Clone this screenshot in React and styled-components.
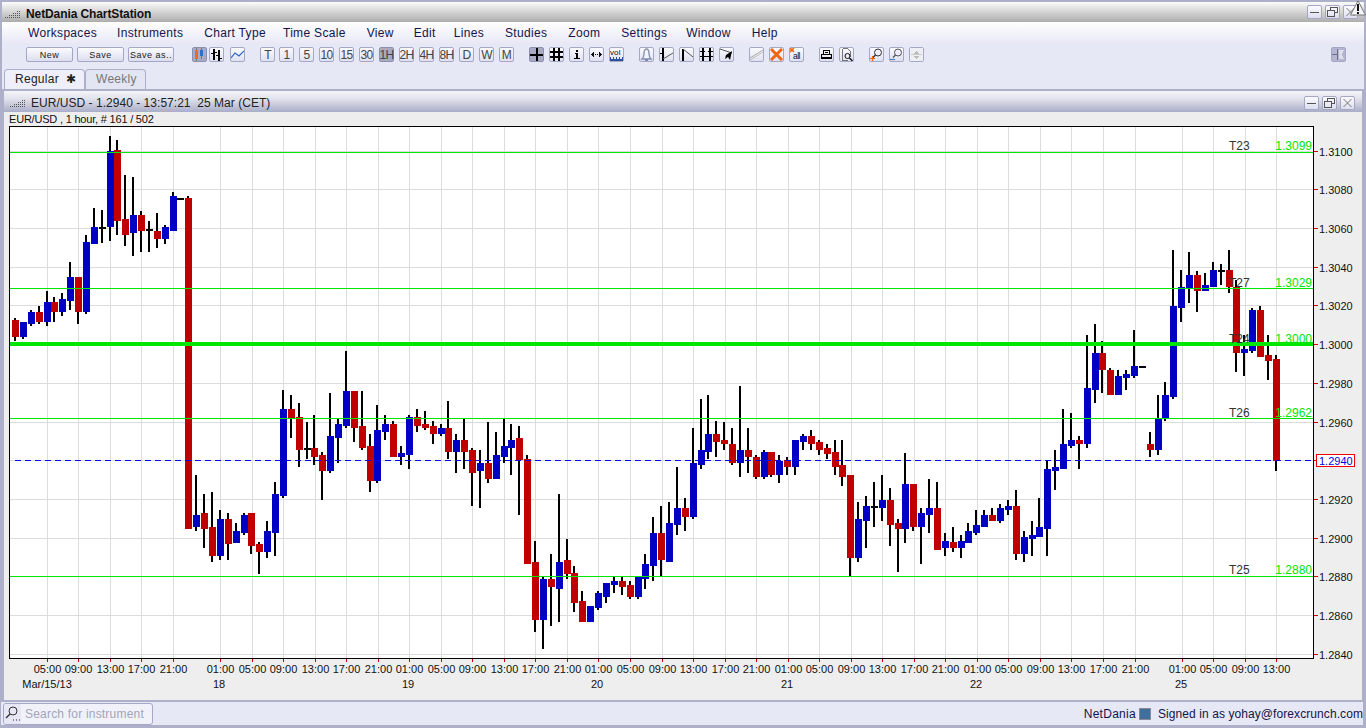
import React from 'react'
import styled, { createGlobalStyle } from 'styled-components'

const GlobalStyle = createGlobalStyle`
	html, body {
		margin: 0;
		padding: 0;
		background: #adb0c8;
	}
	* {
		box-sizing: border-box;
	}
`

const Frame = '#adb0c8'
const Pane = '#e7e8f5'

const Page = styled.div`
	width: 1366px;
	height: 728px;
	position: relative;
	overflow: hidden;
	display: flex;
	flex-direction: column;
	padding-top: 2px;
	background: ${Frame};
	font-family: "Liberation Sans", Arial, sans-serif;
`

const TitleBar = styled.div`
	height: 20px;
	margin: 0 2px;
	display: flex;
	align-items: center;
	padding: 4px 0 0 3px;
	background: linear-gradient(#fbfbfb, #d8d8d8 45%, #adadad);
	font-size: 12px;
	font-weight: bold;
	color: #111;
	letter-spacing: -0.1px;
`

const Grip = styled.svg`
	width: 15px;
	height: 10px;
	margin-right: 6px;
	flex: none;
`

const WindowButtons = styled.div`
	margin-left: auto;
	display: flex;
	gap: 3px;
	margin-right: ${p => p.$right}px;
	margin-top: ${p => p.$top}px;
`

const WindowButton = styled.div`
	width: 15px;
	height: 14px;
	display: flex;
	align-items: center;
	justify-content: center;
	border: 1px solid #a5a8c4;
	border-radius: 2px;
	background: linear-gradient(#fbfbfe, #dcdeee);
`

const WarnMark = styled.svg`
	position: absolute;
	top: 0;
	right: 0;
	width: 16px;
	height: 16px;
`

const MenuBar = styled.div`
	height: 22px;
	margin: 0 2px;
	display: flex;
	align-items: center;
	padding-left: 26px;
	background: linear-gradient(#ffffff, ${Pane});
	font-size: 12px;
	color: #14144a;
	letter-spacing: 0.32px;
`

const MenuItem = styled.span`
	margin-right: ${p => p.$gap}px;
`

const ToolArea = styled.div`
	height: 45px;
	margin: 0 2px;
	background: ${Pane};
	display: flex;
	flex-direction: column;
`

const ToolRow = styled.div`
	height: 25px;
	display: flex;
	align-items: flex-start;
	padding: 3px 0 0 24px;
	gap: 15px;
`

const Group = styled.div`
	display: flex;
	gap: ${p => p.$gap ?? 5}px;
	margin-left: ${p => p.$left ?? 0}px;
`

const TextButton = styled.div`
	width: ${p => p.$w}px;
	height: 15px;
	display: flex;
	align-items: center;
	justify-content: center;
	border: 1px solid #a5a8c4;
	border-radius: 2px;
	background: linear-gradient(#fbfbfe, #dcdeee);
	font-size: 9px;
	color: #222;
	letter-spacing: 0.5px;
`

const IconButton = styled.div`
	width: 15px;
	height: 15px;
	display: flex;
	align-items: center;
	justify-content: center;
	border: 1px solid ${p => (p.$active ? '#8c8fae' : '#a5a8c4')};
	border-radius: 2px;
	background: ${p => (p.$active ? '#a9abc6' : 'linear-gradient(#fafafe, #dfe1f0)')};
	font-size: 12px;
	color: #444;
	letter-spacing: -0.6px;
	white-space: nowrap;
	svg {
		display: block;
		flex: none;
	}
`

const PinButton = styled(IconButton)`
	position: absolute;
	top: 47px;
	left: 1331px;
	background: #b4b6cf;
	border-color: #a5a8c4;
`

const TabRow = styled.div`
	height: 20px;
	display: flex;
	align-items: flex-end;
	padding-left: 2px;
`

const Tab = styled.div`
	height: 20px;
	width: ${p => p.$w}px;
	padding: 0 0 2px ${p => p.$pad}px;
	display: flex;
	align-items: center;
	gap: 7px;
	border: 1px solid ${Frame};
	border-bottom: none;
	border-radius: 4px 4px 0 0;
	font-size: 12px;
	letter-spacing: 0.28px;
	color: ${p => (p.$current ? '#222' : '#777')};
	background: ${p => (p.$current ? '#eeeff8' : '#e4e5f2')};
`

const ChartWindow = styled.div`
	height: 609px;
	margin: 2px 4px 0;
	display: flex;
	flex-direction: column;
	background: #eeeeee;
`

const ChartTitle = styled.div`
	height: 21px;
	flex: none;
	display: flex;
	align-items: center;
	padding: 3px 0 0 6px;
	background: linear-gradient(#f5f5f9, #dfe0ea 40%, #a9adc8);
	font-size: 12px;
	color: #222;
	letter-spacing: 0.03px;
	white-space: pre;
`

const ChartInfo = styled.div`
	height: 14px;
	flex: none;
	padding: 1px 0 0 5px;
	font-size: 11px;
	line-height: 12px;
	letter-spacing: -0.2px;
	color: #111;
`

const ChartSvg = styled.svg`
	display: block;
	flex: none;
	font-family: "Liberation Sans", Arial, sans-serif;
	font-size: 11px;
`

const StatusBar = styled.div`
	height: 23px;
	margin: 2px 3px 0 1px;
	display: flex;
	align-items: center;
	background: ${Pane};
	font-size: 12px;
	color: #14144a;
	letter-spacing: 0.28px;
`

const SearchBox = styled.div`
	width: 150px;
	height: 22px;
	margin-left: 2px;
	display: flex;
	align-items: stretch;
	border: 1px solid #a5a8c4;
	border-radius: 3px;
	overflow: hidden;
	background: #f1f2f9;
`

const SearchIcon = styled.div`
	width: 17px;
	display: flex;
	align-items: center;
	justify-content: center;
	background: ${Pane};
`

const SearchText = styled.div`
	padding-left: 4px;
	line-height: 20px;
	letter-spacing: 0.2px;
	color: #a3a4b8;
`

const StatusRight = styled.div`
	margin-left: auto;
	display: flex;
	align-items: center;
	gap: 3px;
`

const SignedIn = styled.span`
	letter-spacing: 0.08px;
`

const Square = styled.div`
	width: 12px;
	height: 12px;
	margin-right: 4px;
	border: 1px solid #8a8a96;
	background: #3f6f9d;
`

const Svg = ({ children }) => (
	<svg width="13" height="13" viewBox="0 0 13 13" shapeRendering="crispEdges">{children}</svg>
)

const R = ({ x, y, w, h, c = '#000' }) => <rect x={x} y={y} width={w} height={h} fill={c} />

const icons = {
	candle: <Svg><R x={3} y={0} w={1} h={13} c="#777" /><R x={2} y={2} w={3} h={9} c="#f06a1c" /><R x={8} y={0} w={1} h={11} c="#777" /><R x={7} y={2} w={3} h={6} c="#2f6fc8" /></Svg>,
	bars: <Svg><R x={3} y={1} w={2} h={11} /><R x={1} y={5} w={2} h={1} /><R x={5} y={4} w={2} h={1} /><R x={8} y={2} w={2} h={11} /><R x={6} y={7} w={2} h={1} /><R x={10} y={10} w={2} h={1} /></Svg>,
	line: <Svg><polyline points="0,10 4,5 8,8 13,3" fill="none" stroke="#2f63c0" strokeWidth="1.2" shapeRendering="auto" /></Svg>,
	cross: <Svg><R x={6} y={0} w={2} h={13} /><R x={0} y={6} w={13} h={2} /></Svg>,
	grid: <Svg><R x={3} y={0} w={2} h={13} /><R x={8} y={0} w={2} h={13} /><R x={0} y={3} w={13} h={2} /><R x={0} y={8} w={13} h={2} /></Svg>,
	info: <Svg><R x={6} y={2} w={2} h={2} /><R x={5} y={5} w={3} h={1} /><R x={6} y={5} w={2} h={6} /><R x={4} y={10} w={6} h={1} /></Svg>,
	arrows: <Svg><polygon points="1,6.5 4,4 4,9" fill="#111" /><polygon points="12,6.5 9,4 9,9" fill="#111" /><R x={5} y={6} w={1} h={1} /><R x={7} y={6} w={1} h={1} /></Svg>,
	vol: <svg width="13" height="13" viewBox="0 0 13 13"><text x="0" y="7" fontSize="8" fontFamily="Liberation Sans" letterSpacing="0.1" fill="#111">vol</text><path d="M0 13V9h1v2h2V9h1v2h2V9h1v2h2V9h1v2h2V9h1v4z" fill="#2c4fa0" /></svg>,
	bell: <Svg><path d="M2 11c1-1 2-2 2-5 0-3 1-5 2.500-5S9 3 9 6c0 3 1 4 2 5z" fill="#f4f5fb" stroke="#7f8dab" strokeWidth="1.3" shapeRendering="auto" /><R x={5} y={11} w={3} h={2} c="#7f8dab" /></Svg>,
	trend: <Svg><R x={2} y={0} w={2} h={13} /><R x={0} y={5} w={2} h={1} /><line x1="3" y1="11" x2="13" y2="5" stroke="#555" shapeRendering="auto" /></Svg>,
	fan: <Svg><R x={2} y={1} w={2} h={12} /><line x1="3" y1="1" x2="13" y2="9" stroke="#555" shapeRendering="auto" /></Svg>,
	fib: <Svg><R x={2} y={0} w={2} h={13} /><R x={9} y={0} w={2} h={13} /><R x={0} y={3} w={13} h={1} /><R x={0} y={8} w={13} h={1} /><R x={5} y={3} w={3} h={1} c="#e7e8f5" /></Svg>,
	arrow: <Svg><line x1="0" y1="1" x2="12" y2="5" stroke="#555" shapeRendering="auto" /><polygon points="12,3 10,12 8,9 5,11 6,7" fill="#000" shapeRendering="auto" /></Svg>,
	pencil: <Svg><line x1="0" y1="10" x2="13" y2="2" stroke="#aaa" shapeRendering="auto" /><line x1="0" y1="12" x2="13" y2="4" stroke="#bbb" shapeRendering="auto" /></Svg>,
	del: <Svg><path d="M1 1l11 11M12 1L1 12" stroke="#f0650e" strokeWidth="3" shapeRendering="auto" /></Svg>,
	delAll: <svg width="13" height="13" viewBox="0 0 13 13"><path d="M0 0l4 4M4 0L0 4" stroke="#f0650e" strokeWidth="1.6" /><text x="3" y="11" fontSize="8.500" fontFamily="Liberation Sans" fill="#111">all</text></svg>,
	print: <Svg><R x={3} y={2} w={7} h={1} /><R x={3} y={2} w={1} h={4} /><R x={9} y={2} w={1} h={4} /><R x={5} y={4} w={3} h={1} /><R x={1} y={6} w={11} h={1} /><R x={1} y={6} w={1} h={4} /><R x={11} y={6} w={1} h={4} /><R x={1} y={9} w={11} h={2} /></Svg>,
	preview: <Svg><path d="M2.500.5h5l3 3v5M2.500.5v12h5" fill="none" stroke="#777" /><circle cx="7.500" cy="8" r="2.500" fill="none" stroke="#111" shapeRendering="auto" /><line x1="9.500" y1="10" x2="12.500" y2="13" stroke="#111" strokeWidth="1.400" shapeRendering="auto" /></Svg>,
	zoomIn: <svg width="13" height="13" viewBox="0 0 13 13"><circle cx="8" cy="4.500" r="3.500" fill="#eef" stroke="#333" /><line x1="5.500" y1="7" x2="2.500" y2="10" stroke="#333" strokeWidth="1.500" /><path d="M0 10.500h5M2.500 8v5" stroke="#f0650e" strokeWidth="1.200" /></svg>,
	zoomOut: <svg width="13" height="13" viewBox="0 0 13 13"><circle cx="8" cy="4.500" r="3.500" fill="#eef" stroke="#555" /><line x1="5.500" y1="7" x2="3" y2="9.500" stroke="#555" strokeWidth="1.500" /><path d="M0 11.500h5" stroke="#4a7fc0" strokeWidth="1.200" /></svg>,
	updown: <Svg><R x={-1} y={-1} w={15} h={15} c="#eeeff3" /><polygon points="6.500,3 4,6 9,6" fill="#bbb" /><polygon points="6.500,11 4,8 9,8" fill="#bbb" /><R x={1} y={6} w={11} h={1} c="#ccc" /></Svg>,
	pin: <Svg><R x={0} y={6} w={5} h={1} c="#6d6f8a" /><R x={5} y={1} w={1} h={11} c="#6d6f8a" /><path d="M7 2h5L10 6.500 12 11H7z" fill="#dde" /></Svg>,
}

// candle data read off the picture: colour, wick top, body top, body bottom, wick bottom
const candles = [
	['r', 318, 320, 337, 341], ['b', 322, 322, 337, 339], ['b', 310, 312, 324, 326], ['r', 306, 312, 322, 324],
	['b', 291, 302, 322, 326], ['r', 297, 302, 312, 322], ['b', 293, 299, 312, 316], ['b', 262, 277, 301, 310],
	['r', 277, 277, 312, 324], ['b', 235, 242, 312, 314], ['b', 208, 227, 244, 244], ['d', 210, 227, 229, 243],
	['b', 136, 151, 227, 241], ['r', 140, 150, 221, 235], ['r', 175, 219, 235, 246], ['b', 177, 215, 233, 256],
	['r', 211, 215, 231, 252], ['d', 221, 229, 231, 252], ['r', 213, 231, 239, 248], ['b', 225, 227, 239, 244],
	['b', 192, 196, 231, 231], ['d', 198, 198, 200, 200], ['r', 196, 198, 529, 529], ['b', 475, 515, 527, 531],
	['r', 494, 513, 529, 548], ['r', 492, 527, 556, 562], ['b', 510, 519, 556, 560], ['r', 513, 519, 544, 560],
	['b', 523, 531, 543, 543], ['b', 513, 515, 533, 535], ['r', 513, 513, 546, 554], ['r', 542, 544, 552, 574],
	['b', 521, 531, 552, 558], ['b', 482, 494, 533, 556], ['b', 390, 409, 496, 498], ['r', 395, 409, 418, 438],
	['r', 403, 417, 450, 467], ['d', 422, 448, 450, 459], ['r', 415, 448, 457, 465], ['r', 452, 455, 471, 500],
	['b', 393, 436, 471, 473], ['b', 419, 424, 438, 463], ['b', 351, 391, 426, 428], ['r', 391, 391, 428, 442],
	['r', 391, 426, 448, 450], ['r', 434, 446, 481, 492], ['b', 405, 430, 481, 483], ['b', 415, 424, 432, 440],
	['r', 421, 424, 457, 457], ['b', 446, 453, 457, 465], ['b', 415, 417, 455, 469], ['r', 409, 417, 426, 432],
	['r', 411, 424, 428, 430], ['r', 421, 426, 434, 444], ['b', 424, 428, 434, 436], ['r', 401, 428, 452, 459],
	['b', 434, 440, 452, 473], ['r', 419, 440, 452, 469], ['r', 448, 450, 473, 506], ['b', 450, 463, 471, 508],
	['r', 422, 463, 479, 483], ['b', 432, 455, 479, 479], ['b', 419, 446, 457, 463], ['b', 424, 440, 448, 475],
	['r', 426, 438, 460, 515], ['r', 455, 459, 564, 564], ['r', 541, 562, 620, 632], ['b', 577, 579, 620, 649],
	['r', 554, 579, 587, 626], ['b', 494, 562, 589, 622], ['r', 539, 560, 574, 579], ['r', 566, 573, 603, 612],
	['r', 591, 601, 622, 622], ['b', 606, 606, 622, 622], ['b', 591, 593, 608, 610], ['b', 583, 583, 597, 603],
	['b', 577, 581, 585, 593], ['r', 577, 581, 587, 595], ['r', 581, 585, 597, 599], ['b', 577, 577, 597, 599],
	['b', 554, 564, 579, 589], ['b', 517, 533, 566, 581], ['r', 506, 533, 560, 576], ['b', 502, 523, 562, 562],
	['b', 467, 508, 525, 535], ['r', 498, 508, 517, 531], ['b', 428, 463, 517, 519], ['b', 399, 450, 465, 469],
	['b', 395, 434, 452, 459], ['r', 421, 434, 442, 457], ['r', 422, 440, 444, 450], ['r', 428, 444, 463, 465],
	['b', 386, 450, 463, 477], ['r', 428, 450, 457, 473], ['r', 455, 457, 477, 479], ['b', 450, 452, 477, 479],
	['r', 452, 452, 475, 477], ['b', 455, 461, 475, 483], ['r', 457, 460, 467, 475], ['b', 440, 440, 467, 475],
	['b', 434, 436, 442, 450], ['r', 430, 436, 444, 450], ['r', 440, 442, 450, 455], ['r', 444, 448, 454, 459],
	['r', 440, 452, 467, 475], ['r', 440, 465, 477, 486], ['r', 475, 475, 558, 576], ['b', 502, 519, 558, 562],
	['b', 496, 506, 521, 548], ['d', 482, 506, 508, 527], ['b', 475, 500, 508, 521], ['r', 488, 500, 525, 546],
	['r', 519, 523, 529, 572], ['b', 453, 484, 529, 543], ['r', 484, 484, 527, 531], ['b', 508, 513, 527, 564],
	['b', 479, 508, 515, 533], ['r', 482, 508, 550, 550], ['b', 533, 541, 548, 556], ['r', 527, 542, 548, 552],
	['b', 535, 541, 548, 558], ['b', 523, 531, 543, 543], ['b', 510, 525, 533, 535], ['b', 510, 515, 527, 527],
	['r', 508, 515, 521, 521], ['b', 504, 508, 521, 523], ['b', 500, 506, 510, 515], ['r', 490, 506, 554, 560],
	['b', 531, 537, 554, 562], ['b', 521, 535, 539, 556], ['b', 498, 527, 537, 537], ['b', 461, 469, 529, 556],
	['b', 450, 467, 471, 490], ['b', 409, 444, 469, 469], ['b', 413, 440, 446, 448], ['r', 436, 440, 444, 469],
	['b', 335, 388, 444, 448], ['b', 324, 353, 390, 403], ['r', 341, 353, 370, 393], ['r', 368, 370, 395, 395],
	['b', 370, 376, 395, 395], ['b', 370, 374, 378, 390], ['b', 330, 366, 376, 378], ['d', 366, 366, 368, 368],
	['r', 432, 444, 450, 457], ['b', 395, 419, 450, 455], ['b', 382, 395, 418, 421], ['b', 250, 306, 397, 399],
	['b', 270, 287, 308, 322], ['b', 252, 275, 288, 303], ['r', 271, 275, 291, 312], ['b', 273, 285, 291, 291],
	['b', 262, 270, 287, 287], ['d', 264, 270, 272, 285], ['r', 250, 270, 287, 293], ['r', 280, 287, 353, 372],
	['b', 335, 349, 353, 376], ['b', 308, 310, 351, 353], ['r', 306, 310, 357, 357], ['r', 335, 355, 361, 380],
	['r', 355, 359, 461, 471],
]

const bodyColor = { r: '#c00000', b: '#0000c4', d: '#000' }

const timeTicks = [
	[47, '05:00'], [78, '09:00'], [110, '13:00'], [141, '17:00'], [173, '21:00'], [220, '01:00'], [252, '05:00'],
	[283, '09:00'], [315, '13:00'], [346, '17:00'], [378, '21:00'], [409, '01:00'], [441, '05:00'], [472, '09:00'],
	[504, '13:00'], [535, '17:00'], [567, '21:00'], [598, '01:00'], [630, '05:00'], [662, '09:00'], [693, '13:00'],
	[725, '17:00'], [756, '21:00'], [788, '01:00'], [819, '05:00'], [851, '09:00'], [882, '13:00'], [914, '17:00'],
	[945, '21:00'], [977, '01:00'], [1008, '05:00'], [1040, '09:00'], [1071, '13:00'], [1103, '17:00'], [1135, '21:00'],
	[1182, '01:00'], [1213, '05:00'], [1245, '09:00'], [1276, '13:00'],
]

const dates = [[47, 'Mar/15/13'], [219, '18'], [408, '19'], [597, '20'], [787, '21'], [976, '22'], [1181, '25']]

const priceTicks = [
	[151, '1.3100'], [189, '1.3080'], [228, '1.3060'], [267, '1.3040'], [305, '1.3020'], [344, '1.3000'], [383, '1.2980'],
	[422, '1.2960'], [460, null], [499, '1.2920'], [538, '1.2900'], [576, '1.2880'], [615, '1.2860'], [654, '1.2840'],
]

const levels = [
	{ y: 152, h: 1, name: 'T23', price: '1.3099', ty: 150 },
	{ y: 288, h: 1, name: 'T27', price: '1.3029', ty: 287 },
	{ y: 342, h: 4, name: 'T24', price: '1.3000', ty: 343 },
	{ y: 418, h: 1, name: 'T26', price: '1.2962', ty: 417 },
	{ y: 576, h: 1, name: 'T25', price: '1.2880', ty: 574 },
]

function Chart() {
	return (
		<ChartSvg width="1358" height="574" viewBox="4 126 1358 574">
			<g shapeRendering="crispEdges">
				<rect x="9" y="126" width="1304" height="532" fill="#fff" />
				{timeTicks.map(([x]) => <rect key={x} x={x} y="127" width="1" height="531" fill="#dcdcdc" />)}
				{priceTicks.map(([y]) => <rect key={y} x="10" y={y} width="1303" height="1" fill="#dcdcdc" />)}
				{candles.map(([c, wt, bt, bb, wb], i) => {
					const x = Math.round(12 + 7.88 * i)
					return (
						<g key={i}>
							<rect x={x + 2} y={wt} width="2" height={wb - wt} fill="#000" />
							<rect x={x} y={bt} width="7" height={bb - bt} fill={bodyColor[c]} />
						</g>
					)
				})}
				{levels.map(l => <rect key={l.name} x="10" y={l.y} width="1303" height={l.h} fill="#00e600" />)}
				<line x1="15" y1="460.5" x2="1313" y2="460.5" stroke="#0000f0" strokeDasharray="6 4" />
				<rect x="9" y="126" width="1" height="533" fill="#000" />
				<rect x="9" y="126" width="1305" height="1" fill="#000" />
				<rect x="1313" y="126" width="1" height="533" fill="#000" />
				<rect x="9" y="658" width="1305" height="1" fill="#000" />
				{timeTicks.map(([x]) => <rect key={x} x={x} y="659" width="1" height="3" fill="#d00000" />)}
				{priceTicks.map(([y]) => <rect key={y} x="1314" y={y} width="4" height="1" fill="#d00000" />)}
				<rect x="1316.500" y="454.500" width="38" height="12" fill="#fff" stroke="#f00000" />
			</g>
			{levels.map(l => (
				<g key={l.name}>
					<text x="1229" y={l.ty} fill="#333" fontSize="12">{l.name}</text>
					<text x="1312" y={l.ty} fill="#00e600" fontSize="12" textAnchor="end">{l.price}</text>
				</g>
			))}
			{priceTicks.filter(t => t[1]).map(([y, t]) => <text key={y} x="1319" y={y + 5} fill="#111">{t}</text>)}
			<text x="1319" y="465" fill="#0000e0">1.2940</text>
			{timeTicks.map(([x, t]) => <text key={x} x={x + 0.5} y="673" fill="#111" textAnchor="middle">{t}</text>)}
			{dates.map(([x, t]) => <text key={x} x={x} y="688" fill="#111" textAnchor="middle">{t}</text>)}
		</ChartSvg>
	)
}

function GripDots() {
	const rows = [[12, 14], [8, 14], [4, 14], [0, 14]]
	return (
		<Grip viewBox="0 0 15 10" shapeRendering="crispEdges">
			{rows.map(([from, to], r) => {
				const dots = []
				for (let x = from; x <= to; x += 2) dots.push(<rect key={x} x={x} y={r * 2 + 2} width="1" height="1" fill="#555" />)
				return <g key={r}>{dots}</g>
			})}
		</Grip>
	)
}

const MinIcon = () => <svg width="11" height="9" shapeRendering="crispEdges"><rect x="1" y="4" width="9" height="1" fill="#555" /></svg>
const RestoreIcon = () => (
	<svg width="11" height="10" shapeRendering="crispEdges">
		<path d="M3.500 3V.5h7v5H8M.5 3.500h7v6h-7z" fill="none" stroke="#555" />
	</svg>
)
const CloseIcon = () => (
	<svg width="11" height="10"><path d="M1.500 1l8 8M9.500 1l-8 8" stroke="#777" fill="none" /></svg>
)

function WinControls({ right, top }) {
	return (
		<WindowButtons $right={right} $top={top}>
			<WindowButton><MinIcon /></WindowButton>
			<WindowButton><RestoreIcon /></WindowButton>
			<WindowButton><CloseIcon /></WindowButton>
		</WindowButtons>
	)
}

const menus = [
	['Workspaces', 20], ['Instruments', 21], ['Chart Type', 17], ['Time Scale', 21], ['View', 20], ['Edit', 18],
	['Lines', 21], ['Studies', 21], ['Zoom', 21], ['Settings', 19], ['Window', 21], ['Help', 0],
]
const periods = ['1', '5', '10', '15', '30', '1H', '2H', '4H', '8H', 'D', 'W', 'M']

export default function App() {
	return (
		<Page>
			<GlobalStyle />
			<TitleBar>
				<GripDots />
				NetDania ChartStation
				<WinControls right={6} top={-4} />
			</TitleBar>
			<WarnMark viewBox="0 0 16 16">
				<path d="M8 .8L15.500 15H.5z" fill="#f3f3f3" stroke="#777" />
				<rect x="7" y="4" width="2" height="7" fill="#111" />
				<rect x="7" y="12" width="2" height="2" fill="#111" />
			</WarnMark>
			<MenuBar>
				{menus.map(([m, gap]) => <MenuItem key={m} $gap={gap}>{m}</MenuItem>)}
			</MenuBar>
			<ToolArea>
				<ToolRow>
					<Group $gap={4}>
						<TextButton $w={47}>New</TextButton>
						<TextButton $w={47}>Save</TextButton>
						<TextButton $w={46}>Save as..</TextButton>
					</Group>
					<Group $gap={2} $left={3}>
						<IconButton $active>{icons.candle}</IconButton>
						<IconButton>{icons.bars}</IconButton>
						<Group $left={4}><IconButton>{icons.line}</IconButton></Group>
					</Group>
					<Group $gap={4}>
						<IconButton>T</IconButton>
						<Group>
							{periods.map(p => <IconButton key={p} $active={p === '1H'}>{p}</IconButton>)}
						</Group>
					</Group>
					<Group>
						<IconButton $active>{icons.cross}</IconButton>
						<IconButton>{icons.grid}</IconButton>
						<IconButton>{icons.info}</IconButton>
						<IconButton>{icons.arrows}</IconButton>
						<IconButton>{icons.vol}</IconButton>
					</Group>
					<Group>
						<IconButton>{icons.bell}</IconButton>
						<IconButton>{icons.trend}</IconButton>
						<IconButton>{icons.fan}</IconButton>
						<IconButton>{icons.fib}</IconButton>
						<IconButton>{icons.arrow}</IconButton>
					</Group>
					<Group>
						<IconButton>{icons.pencil}</IconButton>
						<IconButton>{icons.del}</IconButton>
						<IconButton>{icons.delAll}</IconButton>
					</Group>
					<Group>
						<IconButton>{icons.print}</IconButton>
						<IconButton>{icons.preview}</IconButton>
					</Group>
					<Group>
						<IconButton>{icons.zoomIn}</IconButton>
						<IconButton>{icons.zoomOut}</IconButton>
						<IconButton>{icons.updown}</IconButton>
					</Group>
				</ToolRow>
				<TabRow>
					<Tab $current $w={81} $pad={10}>Regular <span>✱</span></Tab>
					<Tab $w={61} $pad={10}>Weekly</Tab>
				</TabRow>
			</ToolArea>
			<PinButton>{icons.pin}</PinButton>
			<ChartWindow>
				<ChartTitle>
					<GripDots />
					EUR/USD - 1.2940 - 13:57:21  25 Mar (CET)
					<WinControls right={7} top={0} />
				</ChartTitle>
				<ChartInfo>EUR/USD , 1 hour, # 161 / 502</ChartInfo>
				<Chart />
			</ChartWindow>
			<StatusBar>
				<SearchBox>
					<SearchIcon>
						<svg width="15" height="16" viewBox="0 0 15 16">
							<circle cx="8" cy="5" r="4" fill="none" stroke="#333" />
							<line x1="5" y1="8" x2="1" y2="12" stroke="#333" strokeWidth="1.500" />
							<path d="M8 14h1M11 14h1M14 14h1" stroke="#222" />
						</svg>
					</SearchIcon>
					<SearchText>Search for instrument</SearchText>
				</SearchBox>
				<StatusRight>
					NetDania
					<Square />
					<SignedIn>Signed in as yohay@forexcrunch.com</SignedIn>
				</StatusRight>
			</StatusBar>
		</Page>
	)
}
